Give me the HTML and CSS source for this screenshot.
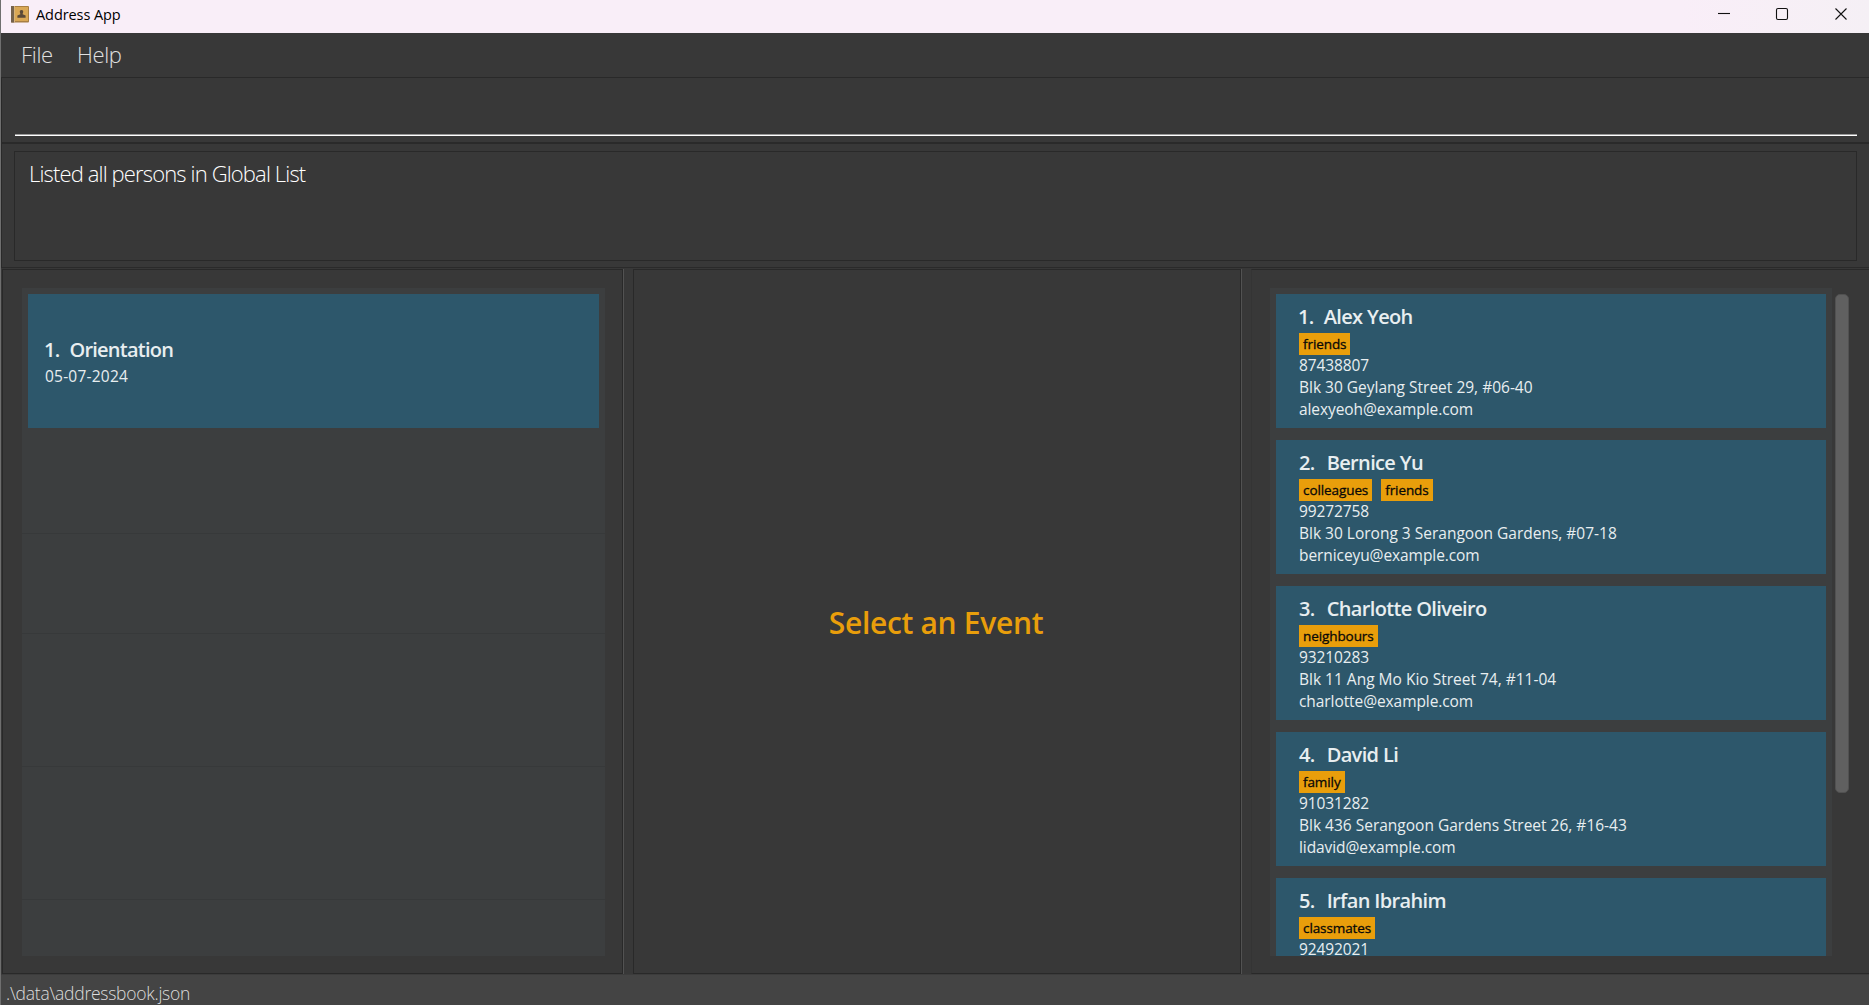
FILE: index.html
```html
<!DOCTYPE html>
<html lang="en">
<head>
<meta charset="utf-8">
<title>Address App</title>
<link rel="stylesheet" href="styles.css">
</head>
<body>
<div class="window">
  <header class="titlebar">
    <svg class="app-icon" width="18" height="17" viewBox="0 0 18 17">
      <rect width="18" height="16.500" rx="1" fill="#a87f43"/>
      <rect x="4" y="1" width="13" height="14" fill="#d9a755"/>
      <rect x="0" y="0" width="3" height="16.500" fill="#75624c"/>
      <path d="M3.500 0v16" stroke="#d5b27b"/>
      <path d="M10.500 4c1.300 0 1.900.9 1.700 2-.1.900-.6 1.400-.6 2.200l3 1.200v2.400H6.400V9.400l3-1.200c0-.8-.5-1.300-.6-2.200-.2-1.100.4-2 1.700-2z" fill="#5b4938"/>
    </svg>
    <span class="title">Address App</span>
    <svg class="controls" width="130" height="14" viewBox="0 0 130 14" fill="none" stroke="#111" stroke-width="1.100">
      <path d="M0 6.500h12"/>
      <rect x="58.500" y="1.500" width="11" height="11" rx="1.500"/>
      <path d="M117.500 1.500l11 11M128.500 1.500l-11 11"/>
    </svg>
  </header>
  <nav class="menubar"><span class="m-file">File</span><span class="m-help">Help</span></nav>
  <section class="command"><div class="command-field"></div></section>
  <section class="result"><div class="result-box"><span>Listed all persons in Global List</span></div></section>
  <main class="panes">
    <section class="pane events">
      <div class="list">
        <div class="card event">
          <h2><span class="num one">1.</span>Orientation</h2>
          <p class="date">05-07-2024</p>
        </div>
        <div class="cell c1"></div><div class="cell c2"></div><div class="cell c3"></div><div class="cell c3"></div><div class="cell c4"></div>
      </div>
    </section>
    <div class="divider"></div>
    <section class="pane detail"><span class="prompt">Select an Event</span></section>
    <div class="divider"></div>
    <section class="pane persons">
      <div class="list">
        <article class="card"><h2><span class="num one">1.</span>Alex Yeoh</h2><div class="tags"><span class="tag">friends</span></div><p class="phone">87438807</p><p>Blk 30 Geylang Street 29, #06-40</p><p class="email">alexyeoh@example.com</p></article>
        <article class="card"><h2><span class="num">2.</span>Bernice Yu</h2><div class="tags"><span class="tag">colleagues</span><span class="tag">friends</span></div><p class="phone">99272758</p><p>Blk 30 Lorong 3 Serangoon Gardens, #07-18</p><p class="email">berniceyu@example.com</p></article>
        <article class="card"><h2><span class="num">3.</span>Charlotte Oliveiro</h2><div class="tags"><span class="tag">neighbours</span></div><p class="phone">93210283</p><p>Blk 11 Ang Mo Kio Street 74, #11-04</p><p class="email">charlotte@example.com</p></article>
        <article class="card"><h2><span class="num">4.</span>David Li</h2><div class="tags"><span class="tag">family</span></div><p class="phone">91031282</p><p>Blk 436 Serangoon Gardens Street 26, #16-43</p><p class="email">lidavid@example.com</p></article>
        <article class="card"><h2><span class="num">5.</span>Irfan Ibrahim</h2><div class="tags"><span class="tag">classmates</span></div><p class="phone">92492021</p></article>
      </div>
      <div class="scrollbar"></div>
    </section>
  </main>
  <footer class="status">.\data\addressbook.json</footer>
</div>
</body>
</html>
```
FILE: styles.css
```css
* { box-sizing: border-box; }
body { margin: 0; background: #383838; font-family: "Open Sans", "Noto Sans", sans-serif; }
h2, p { margin: 0; font-weight: 400; }
.window { width: 1869px; height: 1005px; display: flex; flex-direction: column; overflow: hidden; border-left: 1px solid #6f6f6f; white-space: nowrap; }
.titlebar { height: 33px; flex: none; display: flex; align-items: flex-start; padding: 6px 21px 0 10px; background: linear-gradient(90deg, #f9eef8 0 90%, #f5f0f5); color: #000; }
.title { margin-left: 7px; font-size: 14.500px; line-height: 18px; letter-spacing: -0.080px; }
.controls { margin: 1px 0 0 auto; }
.menubar { height: 44px; flex: none; display: flex; padding-left: 20px; font-size: 22px; font-weight: 300; line-height: 42px; letter-spacing: -0.300px; color: #e0e0e0; }
.m-help { margin-left: 24px; }
.command { height: 65px; flex: none; border: 1px solid #292929; border-width: 1px 0 0 1px; padding: 0 12px 0 13px; }
.command-field { height: 58px; border-bottom: 1px solid #fff; box-shadow: inset 0 -1px #999; }
.result { height: 126px; flex: none; border: 1px solid #2a2a2a; border-width: 2px 0 1px 1px; padding: 7px 12px 6px 12px; }
.result-box { height: 110px; border: 1px solid #292929; padding: 6px 14px; font-size: 22px; font-weight: 300; line-height: 30px; letter-spacing: -0.860px; color: #fff; }
.panes { height: 706px; flex: none; display: flex; padding: 1px 0 0 1px; }
.pane { border: 1px solid #292929; }
.events { width: 621px; padding: 18px 16px 17px 19px; }
.detail { width: 608px; display: flex; align-items: center; justify-content: center; padding: 1px 2px 0 0; }
.persons { flex: 1; display: flex; padding: 18px 0 17px 18px; border-right: 0; border-left-color: #343434; }
.divider { width: 10px; border-left: 1px solid #525252; }
.list { height: 668px; overflow: hidden; background: #3c3e3f; padding: 6px; }
.events .list { width: 583px; padding: 0; display: flex; flex-direction: column; }
.persons .list { width: 562px; display: flex; flex-direction: column; gap: 12px; }
.card { height: 134px; flex: none; background: #2d576b; color: #e8eef0; padding: 10px 23px; }
.event { margin: 6px; padding: 43px 17px; }
.card h2 { font-size: 20px; line-height: 26px; font-weight: 600; letter-spacing: -0.640px; }
.event h2 { letter-spacing: -0.760px; }
.num { margin-right: 12px; }
.num.one { margin-left: -1px; margin-right: 10px; }
.card p { font-size: 15.500px; line-height: 22px; margin-top: -1px; margin-bottom: 1px; }
.card .phone { letter-spacing: -0.100px; }
.card .email { letter-spacing: -0.080px; }
.card .date { letter-spacing: 0.220px; margin-top: 2px; }
.tags { display: flex; gap: 9px; height: 22px; margin: 3px 0 0; }
.tag { background: #e99e0b; color: #080808; padding: 0 4px; font-size: 13.500px; line-height: 22px; letter-spacing: -0.090px; -webkit-text-stroke: 0.300px #080808; }
.cell { flex: none; border-bottom: 1px solid #37393a; }
.c1 { height: 100px; } .c2 { height: 100px; } .c3 { height: 133px; } .c4 { height: 57px; border: 0; }
.prompt { color: #e99e0b; font-size: 30px; font-weight: 600; letter-spacing: -0.320px; }
.scrollbar { width: 14px; height: 499px; margin: 6px 0 0 3px; border-radius: 5px; background: #606060; border: 1px solid #515151; }
.status { flex: 1; background: #444; border-top: 1px solid #3c3c3c; color: #ddd; padding-left: 5px; font-size: 17.500px; font-weight: 300; line-height: 37px; letter-spacing: -0.260px; }
```
